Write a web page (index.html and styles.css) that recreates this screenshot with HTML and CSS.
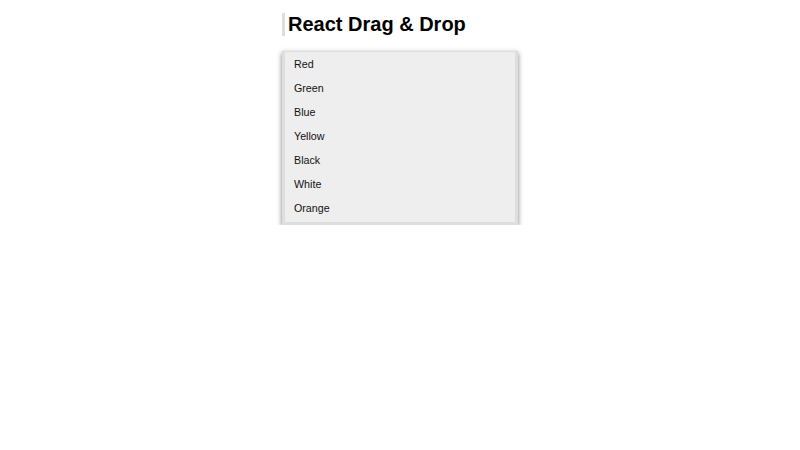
FILE: index.html
```html
<!DOCTYPE html>
<html>
<head>
<meta charset="utf-8">
<link rel="stylesheet" href="styles.css">
</head>
<body>
<div class="app">
  <h1 class="title">React Drag &amp; Drop</h1>
  <ul class="list">
    <li class="item">Red</li>
    <li class="item">Green</li>
    <li class="item">Blue</li>
    <li class="item">Yellow</li>
    <li class="item">Black</li>
    <li class="item">White</li>
    <li class="item">Orange</li>
  </ul>
</div>
</body>
</html>
```
FILE: styles.css
```css
html, body {
  margin: 0;
  padding: 0;
  background: #fff;
}
.app {
  width: 236px;
  margin: 13px auto 0;
  font-family: "Liberation Sans", Arial, sans-serif;
  color: #000;
}
.title {
  margin: 0 0 15px;
  font-size: 20px;
  font-weight: bold;
  line-height: 23px;
  border-left: 3px solid #ddd;
  padding-left: 3px;
}
.list {
  list-style: none;
  margin: 0;
  padding: 0 0 2px;
  background: #eee;
  border: 3px solid #dedede;
  border-top-width: 1px;
  box-shadow: 0 2px 5px rgba(0, 0, 0, 0.5);
}
.item {
  height: 24px;
  line-height: 24px;
  padding-left: 9px;
  font-size: 10.7px;
  color: #111;
}
```
